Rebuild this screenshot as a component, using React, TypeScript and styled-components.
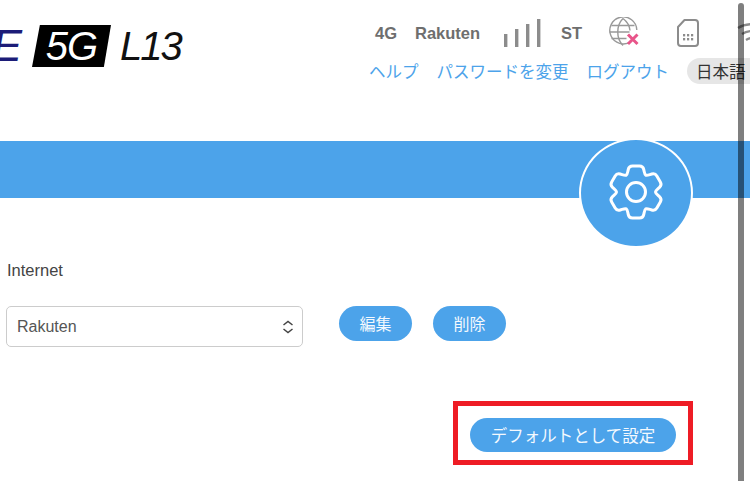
import styled, { createGlobalStyle } from 'styled-components';

const blue = '#4ca3ea';
const sans = '"Liberation Sans", Arial, "Noto Sans CJK JP", sans-serif';

const GlobalStyle = createGlobalStyle`
  html, body {
    margin: 0;
    padding: 0;
    background: #fff;
  }
  body {
    width: 750px;
    height: 481px;
    overflow: hidden;
    font-family: ${sans};
  }
`;

// six wide teeth with soft corners, centred on 0,0
const gearPath = () => {
  const pts: [number, number][] = [];
  for (let i = 0; i < 6; i++) {
    const a = i * 60 - 90;
    [
      [a - 27, 19.5],
      [a - 15, 27],
      [a + 15, 27],
      [a + 27, 19.5],
    ].forEach(([deg, r]) => {
      const rad = (deg * Math.PI) / 180;
      pts.push([r * Math.cos(rad), r * Math.sin(rad)]);
    });
  }
  const cut = (from: [number, number], to: [number, number]) => {
    const len = Math.hypot(to[0] - from[0], to[1] - from[1]);
    const t = Math.min(3.5 / len, 0.5);
    return `${(from[0] + (to[0] - from[0]) * t).toFixed(2)} ${(from[1] + (to[1] - from[1]) * t).toFixed(2)}`;
  };
  return (
    pts
      .map((p, i) => {
        const prev = pts[(i + pts.length - 1) % pts.length];
        const next = pts[(i + 1) % pts.length];
        return `${i === 0 ? 'M' : 'L'}${cut(p, prev)}Q${p[0].toFixed(2)} ${p[1].toFixed(2)} ${cut(p, next)}`;
      })
      .join('') + 'Z'
  );
};

const App = () => {
  return (
    <Page>
      <GlobalStyle />
      <Header>
        <Logo>
          <LogoE>E</LogoE>
          <LogoBadge>
            <LogoBadgeText>5G</LogoBadgeText>
          </LogoBadge>
          <LogoModel>L13</LogoModel>
        </Logo>
        <HeaderRight>
          <StatusRow>
            <StatusText $width={40}>4G</StatusText>
            <StatusText $width={89}>Rakuten</StatusText>
            <SignalIcon width="37" height="30" viewBox="0 0 37 30">
              <rect x="0" y="16" width="3.4" height="13" />
              <rect x="11" y="11" width="3.4" height="18" />
              <rect x="22" y="6" width="3.4" height="23" />
              <rect x="33" y="1" width="3.4" height="28" />
            </SignalIcon>
            <StatusText $width={47}>ST</StatusText>
            <GlobeIcon width="32" height="32" viewBox="0 0 32 32" fill="none">
              <g stroke="#999" strokeWidth="1.4">
                <path d="M23 24.5A13.5 13.5 0 1 1 28.8 13" />
                <path d="M15 1.5c-7 7-7 20 0 27" />
                <path d="M15 1.5c4.500 3.400 6.600 7.500 7 12" />
                <path d="M3.500 8.500h23M1.500 15h20M3.500 21.500h15" />
              </g>
              <path d="M20 17.500l9.500 9.500M29.500 17.500l-9.500 9.500" stroke="#e8558a" strokeWidth="3" />
            </GlobeIcon>
            <SimIcon width="24" height="30" viewBox="0 0 24 30" fill="none">
              <path
                d="M8.500 2H19a3 3 0 0 1 3 3v20a3 3 0 0 1-3 3H5a3 3 0 0 1-3-3V9z"
                stroke="#8c8c8c"
                strokeWidth="2"
                strokeLinejoin="round"
              />
              <g fill="#8c8c8c">
                <rect x="7" y="16" width="2.200" height="2.400" />
                <rect x="11" y="16" width="2.200" height="2.400" />
                <rect x="15" y="16" width="2.200" height="2.400" />
                <rect x="7" y="20" width="2.200" height="2.400" />
                <rect x="11" y="20" width="2.200" height="2.400" />
                <rect x="15" y="20" width="2.200" height="2.400" />
              </g>
            </SimIcon>
            <WifiIcon width="30" height="30" viewBox="0 -2 30 30" fill="none">
              <g stroke="#8c8c8c" strokeWidth="2.400">
                <path d="M1 8c8-5 20-5 28 0" />
                <path d="M5 14c6-4 14-4 20 0" />
                <path d="M9 20c4-2.500 8-2.500 12 0" />
              </g>
            </WifiIcon>
          </StatusRow>
          <NavRow>
            <NavLink href="#">ヘルプ</NavLink>
            <NavLink href="#">パスワードを変更</NavLink>
            <NavLink href="#">ログアウト</NavLink>
            <LanguagePill>日本語</LanguagePill>
          </NavRow>
        </HeaderRight>
      </Header>
      <Band>
        <GearBadge>
          <GearIcon width="64" height="64" viewBox="-32 -32 64 64" fill="none">
            <path d={gearPath()} stroke="#fff" strokeWidth="3" strokeLinejoin="round" />
            <circle r="9.500" stroke="#fff" strokeWidth="3" />
          </GearIcon>
        </GearBadge>
      </Band>
      <Content>
        <FieldLabel>Internet</FieldLabel>
        <FieldRow>
          <SelectBox>
            Rakuten
            <svg width="12" height="14" viewBox="0 0 12 14" fill="none">
              <path
                d="M1.500 5L6 1.500 10.500 5M1.500 9L6 12.500 10.500 9"
                stroke="#444"
                strokeWidth="1.500"
              />
            </svg>
          </SelectBox>
          <PillButton>編集</PillButton>
          <PillButton>削除</PillButton>
        </FieldRow>
        <ActionFrame>
          <DefaultButton>デフォルトとして設定</DefaultButton>
        </ActionFrame>
      </Content>
      <ScrollThumb />
    </Page>
  );
};

const Page = styled.div`
  position: relative;
  width: 750px;
  height: 481px;
  overflow: hidden;
  background: #fff;
`;

const Header = styled.header`
  display: flex;
  height: 141px;
`;

const Logo = styled.div`
  display: flex;
  align-items: flex-start;
  width: 369px;
  flex-shrink: 0;
  padding-top: 25px;
  box-sizing: border-box;
  font-family: ${sans};
  font-style: italic;
`;

const LogoE = styled.span`
  width: 28px;
  margin-left: -8px;
  font-size: 45px;
  line-height: 42px;
  color: #1c1c78;
  flex-shrink: 0;
`;

const LogoBadge = styled.div`
  display: flex;
  align-items: center;
  justify-content: center;
  width: 79px;
  height: 42px;
  margin-left: 12px;
  background: #000;
  clip-path: polygon(10% 0, 100% 0, 91% 100%, 0 100%);
  flex-shrink: 0;
`;

const LogoBadgeText = styled.span`
  color: #fff;
  font-size: 40px;
  line-height: 42px;
  letter-spacing: -1px;
`;

const LogoModel = styled.span`
  margin-left: 9px;
  color: #111;
  font-size: 40px;
  line-height: 42px;
  letter-spacing: -2px;
`;

const HeaderRight = styled.div`
  display: flex;
  flex-direction: column;
  flex-shrink: 0;
  padding-top: 17px;
`;

const StatusRow = styled.div`
  display: flex;
  align-items: center;
  height: 32px;
  padding-left: 6px;
`;

const StatusText = styled.span<{ $width: number }>`
  width: ${(p) => p.$width}px;
  flex-shrink: 0;
  color: #6e6e6e;
  font-size: 16.5px;
  font-weight: 700;
  white-space: nowrap;
`;

const SignalIcon = styled.svg`
  flex-shrink: 0;
  margin-right: 20px;
  fill: #8c8c8c;
`;

const GlobeIcon = styled.svg`
  flex-shrink: 0;
  margin-right: 36px;
`;

const SimIcon = styled.svg`
  flex-shrink: 0;
  margin-right: 37px;
`;

const WifiIcon = styled.svg`
  flex-shrink: 0;
`;

const NavRow = styled.nav`
  display: flex;
  align-items: center;
  gap: 18px;
  margin-top: 9px;
`;

const NavLink = styled.a`
  color: ${blue};
  font-family: "Noto Sans CJK JP", sans-serif;
  font-size: 16.5px;
  line-height: 26px;
  text-decoration: none;
  white-space: nowrap;
`;

const LanguagePill = styled.span`
  flex-shrink: 0;
  padding: 0 18px 0 9px;
  border-radius: 13px;
  background: #e6e6e6;
  color: #333;
  font-family: "Noto Sans CJK JP", sans-serif;
  font-size: 16.5px;
  line-height: 26px;
  white-space: nowrap;
`;

const Band = styled.div`
  position: relative;
  height: 57px;
  background: ${blue};
`;

const GearBadge = styled.div`
  position: absolute;
  left: 579px;
  top: -3px;
  width: 114px;
  height: 110px;
  display: flex;
  align-items: center;
  justify-content: center;
  box-sizing: border-box;
  border: 2px solid #fff;
  border-radius: 50%;
  background: ${blue};
`;

const GearIcon = styled.svg`
  margin-bottom: 2px;
`;

const Content = styled.main`
  display: flex;
  flex-direction: column;
  padding: 63px 0 0 7px;
`;

const FieldLabel = styled.div`
  color: #444;
  font-size: 16.5px;
  line-height: 18px;
`;

const FieldRow = styled.div`
  display: flex;
  align-items: flex-start;
  gap: 21px;
  margin-top: 27px;
`;

const SelectBox = styled.div`
  display: flex;
  align-items: center;
  justify-content: space-between;
  box-sizing: border-box;
  width: 297px;
  height: 41px;
  margin-left: -1px;
  margin-right: 15px;
  padding: 0 8px 0 10px;
  border: 1px solid #ccc;
  border-radius: 5px;
  color: #555;
  font-size: 16px;
`;

const PillButton = styled.button`
  flex-shrink: 0;
  height: 35px;
  padding: 0 20.5px;
  border: none;
  border-radius: 18px;
  background: ${blue};
  color: #f4f9fe;
  font-family: "Noto Sans CJK JP", sans-serif;
  font-size: 16px;
  line-height: 35px;
`;

const DefaultButton = styled(PillButton)`
  height: 34px;
  padding: 0 21px;
  margin-top: 4px;
  font-size: 16.5px;
  line-height: 34px;
`;

const ActionFrame = styled.div`
  align-self: flex-start;
  display: flex;
  align-items: center;
  justify-content: center;
  box-sizing: border-box;
  width: 240px;
  height: 64px;
  margin: 54px 0 0 446px;
  border: 5px solid #ee1c25;
`;

const ScrollThumb = styled.div`
  position: absolute;
  top: 3px;
  right: 6px;
  width: 6px;
  height: 478px;
  border-radius: 3px 3px 0 0;
  background: rgba(0, 0, 0, 0.5);
`;

export default App;
